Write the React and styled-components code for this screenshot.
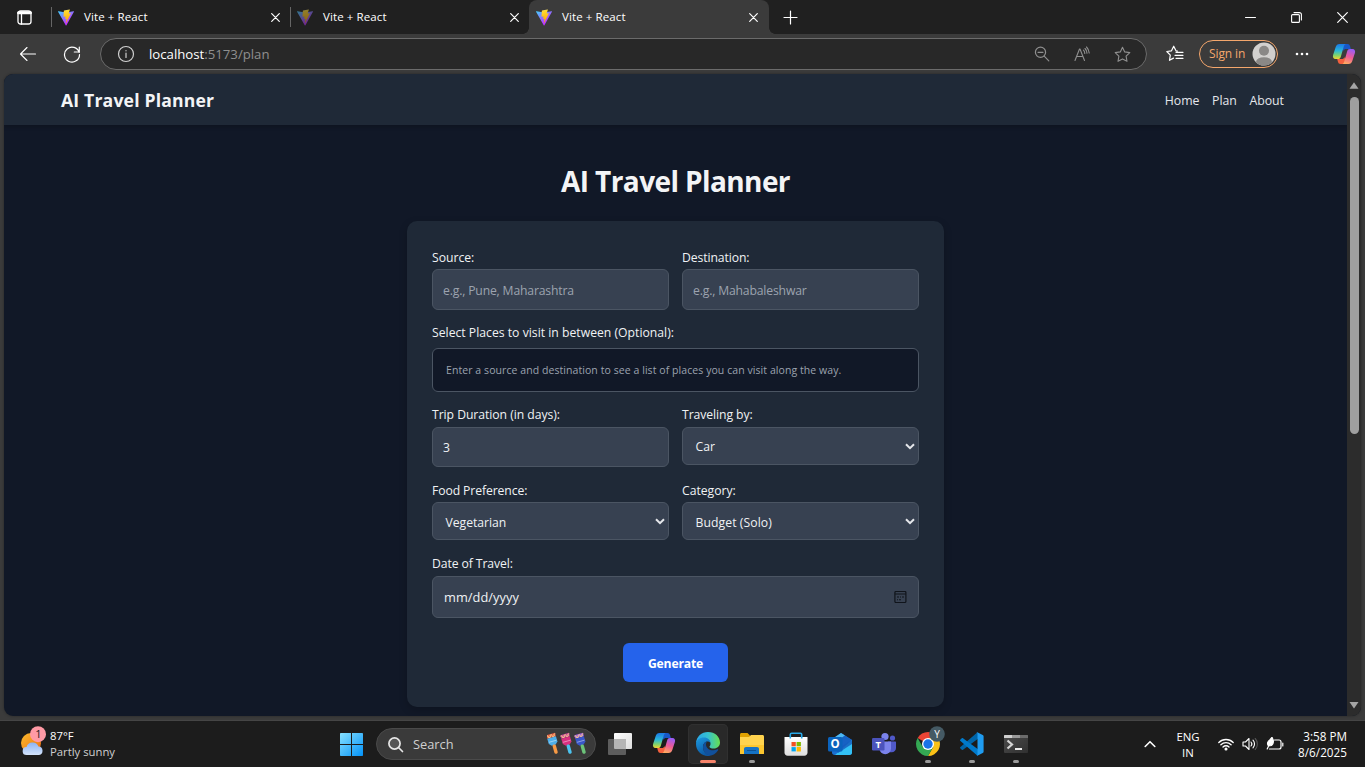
import React from "react";
import styled, { createGlobalStyle } from "styled-components";

const Global = createGlobalStyle`
  * { box-sizing: border-box; }
  html, body { margin: 0; padding: 0; overflow: hidden; background: #1c1c1c; }
  body, input, button { font-family: "Open Sans", "Noto Sans", sans-serif; }
  svg { display: block; flex: none; }
`;

const T = styled.span`
  font-size: ${(p) => p.$s}px;
  letter-spacing: ${(p) => p.$ls || 0}px;
  font-weight: ${(p) => p.$w || 400};
  color: ${(p) => p.$c || "inherit"};
  line-height: ${(p) => p.$lh || 16}px;
  white-space: pre;
`;

const Desktop = styled.div`
  width: 1365px; height: 767px; display: flex; flex-direction: column; overflow: hidden;
`;
const Browser = styled.div`
  height: 721px; display: flex; flex-direction: column; background: #3b3b3b;
  border-bottom: 1px solid #454545;
`;

/* ---------- tab strip ---------- */
const TabStrip = styled.div`
  height: 34px; background: #202020; display: flex; align-items: stretch; color: #fff;
`;
const TabActions = styled.div`
  width: 51px; display: flex; align-items: center; padding-left: 16.5px;
`;
const Tab = styled.div`
  width: ${(p) => (p.$active ? 240 : 239)}px;
  display: flex; align-items: center; position: relative;
  padding: 0 ${(p) => (p.$active ? 11 : 10)}px 0 ${(p) => (p.$active ? 7 : 6)}px;
  background: ${(p) => (p.$active ? "#3b3b3b" : "transparent")};
  border-radius: ${(p) => (p.$active ? "8px 8px 0 0" : 0)};
  &::before, &::after {
    content: ""; display: ${(p) => (p.$active ? "block" : "none")};
    position: absolute; bottom: 0; width: 6px; height: 6px;
  }
  &::before { left: -6px; background: radial-gradient(circle at 0 0, transparent 5.5px, #3b3b3b 6px); }
  &::after { right: -6px; background: radial-gradient(circle at 100% 0, transparent 5.5px, #3b3b3b 6px); }
`;
const TabDivider = styled.div`
  width: 1px; height: 20px; margin: 0 6px 0 -6px; background: #666;
`;
const TabTitle = styled(T)` flex: 1; margin-left: 10px; `;
const NewTab = styled.div` width: 42px; display: flex; align-items: center; justify-content: center; `;
const WindowButtons = styled.div` margin-left: auto; display: flex; `;
const WindowButton = styled.div` width: 46px; display: flex; align-items: center; justify-content: center; `;

/* ---------- address bar ---------- */
const Toolbar = styled.div`
  height: 40px; display: flex; align-items: center; color: #fff; padding-left: 19px;
`;
const Address = styled.div`
  width: 1047px; height: 32px; margin-left: 19px; border: 1px solid #6b6b6b; border-radius: 16px;
  background: #282828; display: flex; align-items: center; padding: 0 15px 0 16px; color: #8f8f8f;
`;
const Url = styled.div` flex: 1; margin-left: 14px; display: flex; `;
const AddressIcons = styled.div` display: flex; gap: 23px; align-items: center; `;
const SignIn = styled.div`
  width: 79px; height: 28px; margin-left: 15px; border: 1px solid #f5a76c; border-radius: 14px;
  display: flex; align-items: center; justify-content: space-between; padding: 0 1px 0 9px; color: #f5a76c;
`;
const ProfileGap = styled.div` width: 23px; `;

/* ---------- web page ---------- */
const Viewport = styled.div`
  flex: 1; margin: 0 4px 4px; display: flex; border-radius: 9px; overflow: hidden; background: #111827;
  box-shadow: 0 0 3px rgba(0, 0, 0, 0.35);
`;
const Page = styled.div` flex: 1; display: flex; flex-direction: column; align-items: center; `;
const NavBar = styled.div`
  width: 100%; height: 51px; background: #1f2937; display: flex; align-items: center;
  justify-content: space-between; padding: 2px 63px 0 57px; color: #f3f4f6;
  box-shadow: 0 2px 4px rgba(0, 0, 0, 0.2);
`;
const Brand = styled(T)` padding-bottom: 2px; `;
const NavLinks = styled.div` display: flex; gap: 12.5px; color: #e5e7eb; `;
const Heading = styled(T)` margin-top: 37px; color: #f3f4f6; display: block; `;
const Card = styled.div`
  width: 537px; height: 486px; margin-top: 21px; padding: 26px 25px 25px; border-radius: 10px;
  background: #1f2937; color: #e5e7eb; display: flex; flex-direction: column;
  box-shadow: 0 3px 8px rgba(0, 0, 0, 0.2);
`;
const FormRow = styled.div`
  display: grid; gap: 13px; grid-template-columns: ${(p) => (p.$single ? "1fr" : "1fr 1fr")};
  margin-bottom: ${(p) => p.$mb}px; align-items: start;
`;
const Field = styled.div` display: flex; flex-direction: column; min-width: 0; `;
const Label = styled(T)` height: ${(p) => p.$h}px; color: #f0f2f4; `;
const control = `
  width: 100%; border: 1px solid #4b5563; border-radius: 6px; background: #374151; color: #f0f2f4;
  display: flex; align-items: center; outline: none;
`;
const Input = styled.input`
  ${control}
  height: ${(p) => p.$h}px; padding: ${(p) => (p.$pt ?? 2)}px 10px 0; font-size: 12.2px; letter-spacing: ${(p) => p.$ls || 0}px;
  &::placeholder { color: #9ca3af; opacity: 1; }
`;
const Select = styled.div`
  ${control}
  height: 38px; padding: ${(p) => p.$pt || 0}px 3px 0 12.5px; justify-content: space-between;
`;
const Chevron = styled.svg` margin-top: ${(p) => -(p.$up || 0)}px; `;
const DateInput = styled.div`
  ${control}
  height: 42px; padding: 0 11px; justify-content: space-between;
`;
const Hint = styled.div`
  ${control}
  height: 44px; background: #111827; color: #9ca3af; padding: 0 13px;
`;
const Generate = styled.button`
  width: 105px; height: 39px; align-self: center; border: 0; border-radius: 6px; padding: 1px 0 0;
  background: #2563eb; color: #fff;
`;
const ScrollBar = styled.div`
  width: 14px; background: #2c2c2c; display: flex; flex-direction: column; align-items: center;
  padding: 8px 0 7px;
`;
const Thumb = styled.div` width: 9px; height: 337px; margin: 8px 0 auto; border-radius: 5px; background: #9f9f9f; `;

/* ---------- taskbar ---------- */
const TaskBar = styled.div`
  height: 46px; background: #1c1c1c; display: flex; align-items: center; color: #fff; padding-left: 20px;
`;
const Weather = styled.div` width: 320px; display: flex; align-items: center; gap: 4px; `;
const Stack = styled.div`
  display: flex; flex-direction: column; align-items: ${(p) => p.$align || "flex-start"};
  width: ${(p) => (p.$width ? p.$width + "px" : "auto")}; margin-left: ${(p) => p.$ml || 0}px;
  padding-top: ${(p) => p.$pt || 0}px;
`;
const Search = styled.div`
  width: 220px; height: 32px; margin: 0 2px 0 12px; border-radius: 16px; background: #3a3a3a;
  border: 1px solid #4a4a4a; display: flex; align-items: center; padding: 0 6px 0 10px;
`;
const SearchText = styled(T)` flex: 1; margin-left: 9px; color: #d0d0d0; `;
const AppSlot = styled.div`
  width: 44px; height: 46px; display: flex; justify-content: center; padding-top: 3px;
`;
const AppTile = styled.div`
  width: 40px; height: 40px; border-radius: 5px; display: flex; flex-direction: column; align-items: center;
  background: ${(p) => (p.$active ? "#292929" : "transparent")};
  box-shadow: ${(p) => (p.$active ? "inset 0 0 0 1px #303030" : "none")};
  padding-top: 7px;
`;
const Running = styled.div`
  width: ${(p) => (p.$active ? 16 : 6)}px; height: 3px; border-radius: 2px; margin-top: 3px;
  background: ${(p) => (p.$active ? "#f7846b" : "#9a9a9a")};
`;
const Tray = styled.div` margin-left: auto; display: flex; align-items: center; padding-right: 18px; `;

/* ---------- drawings ---------- */
const ViteLogo = ({ id, dim }) => (
  <svg width="16" height="17" viewBox="0 0 256 257" opacity={dim ? 0.5 : 1}>
    <defs>
      <linearGradient id={id + "a"} x1="0" y1="0" x2=".6" y2=".8">
        <stop offset="0" stopColor="#41d1ff" /><stop offset="1" stopColor="#bd34fe" />
      </linearGradient>
      <linearGradient id={id + "b"} x1=".4" y1="0" x2=".5" y2=".9">
        <stop offset="0" stopColor="#ffea83" /><stop offset=".1" stopColor="#ffdd35" /><stop offset="1" stopColor="#ffa800" />
      </linearGradient>
    </defs>
    <path fill={`url(#${id}a)`} d="M255.153 37.938L134.897 252.976c-2.483 4.44-8.862 4.466-11.382.048L.875 37.958c-2.746-4.814 1.371-10.646 6.827-9.67l120.385 21.517a6.537 6.537 0 0 0 2.322-.004l117.867-21.483c5.438-.991 9.574 4.796 6.877 9.62Z" />
    <path fill={`url(#${id}b)`} d="M185.432.063L96.44 17.501a3.268 3.268 0 0 0-2.634 3.014l-5.474 92.456a3.268 3.268 0 0 0 3.997 3.378l24.777-5.718c2.318-.535 4.413 1.507 3.936 3.838l-7.361 36.047c-.495 2.426 1.782 4.5 4.151 3.78l15.304-4.649c2.372-.72 4.652 1.36 4.15 3.788l-11.698 56.621c-.732 3.542 3.979 5.473 5.943 2.437l1.313-2.028l72.516-144.72c1.215-2.423-.88-5.186-3.54-4.672l-25.505 4.922c-2.396.462-4.435-1.77-3.759-4.114l16.646-57.705c.677-2.35-1.37-4.583-3.769-4.113Z" />
  </svg>
);

const Line = styled(({ w = 16, h = w, d, sw = 1.2, color = "currentColor", children, className }) => (
  <svg className={className} width={w} height={h} viewBox={`0 0 ${w} ${h}`} fill="none" stroke={color}
    strokeWidth={sw} strokeLinecap="round" strokeLinejoin="round">
    {d && <path d={d} />}
    {children}
  </svg>
))` margin-left: ${(p) => p.$ml || 0}px; `;

const CloseIcon = ({ s = 9 }) => <Line w={s} d={`M.7.7 ${s - 0.7} ${s - 0.7}M${s - 0.7}.7.7 ${s - 0.7}`} />;
const STAR = "M8.5 1.2l2.2 4.7 5.1.7-3.7 3.6.9 5.1-4.5-2.4L4 15.3l.9-5.1L1.200 6.600l5.100-.7z";

const CopilotLogo = ({ id, size = 24 }) => (
  <svg width={size} height={size} viewBox="0 0 24 24">
    <defs>
      <linearGradient id={id + "a"} x1="0" y1="0" x2="0" y2="1">
        <stop offset="0" stopColor="#1a78e8" /><stop offset=".45" stopColor="#2ab7d8" />
        <stop offset=".75" stopColor="#7fd36b" /><stop offset="1" stopColor="#f2d432" />
      </linearGradient>
      <linearGradient id={id + "b"} x1=".6" y1="0" x2=".3" y2="1">
        <stop offset="0" stopColor="#9a5cf5" /><stop offset=".5" stopColor="#ec5a96" /><stop offset="1" stopColor="#ffab5e" />
      </linearGradient>
    </defs>
    <path fill="#1857c8" d="M9 2h6.500c1.500 0 2.100.8 2.500 2l.8 3h-4.600c-1.500 0-2.200.6-2.600 2z" />
    <path fill="#f4603e" d="M15 22H8.500C7 22 6.400 21.200 6 20l-.8-3h4.600c1.500 0 2.200-.6 2.600-2z" />
    <path fill={`url(#${id}a)`} d="M7.500 2h6.300c-1.200.4-1.700 1.400-2.100 2.800L8.800 14.700C8.300 16.300 7.600 17 6 17H3.600C1.300 17 .5 15.300 1.100 13L3.700 5C4.400 2.900 5.400 2 7.500 2z" />
    <path fill={`url(#${id}b)`} d="M16.500 22h-6.300c1.200-.4 1.700-1.400 2.100-2.800l2.900-9.900C15.700 7.700 16.400 7 18 7h2.400c2.300 0 3.100 1.700 2.500 4l-2.600 8c-.7 2.100-1.700 3-3.800 3z" />
  </svg>
);

const EdgeLogo = () => (
  <svg width="26" height="26" viewBox="0 0 26 26">
    <defs>
      <linearGradient id="eg1" x1="0" y1=".3" x2="1" y2=".3">
        <stop offset="0" stopColor="#2aa5e8" /><stop offset=".5" stopColor="#35c1d0" /><stop offset="1" stopColor="#67e04f" />
      </linearGradient>
      <linearGradient id="eg2" x1="0" y1="0" x2=".4" y2="1">
        <stop offset="0" stopColor="#1c9be2" /><stop offset="1" stopColor="#0c59a4" />
      </linearGradient>
    </defs>
    <path fill="url(#eg1)" d="M1 12C1.500 5.500 6.500 1 13 1c7 0 12 4.700 12 10.500 0 3.600-2.600 6-6.200 6-2.600 0-4.300-.8-4.300-1.800 0-.7 1-1.200 1-3 0-2.600-2.600-5-6.200-5C5.500 7.700 2.500 9.300 1 12z" />
    <path fill="url(#eg2)" d="M1 13c0-4 3.600-6.500 8-6.500 3.900 0 6.500 2.500 6.500 5.500-.6-1-1.900-1.500-3-1.500-2.500 0-4.500 2.400-4.500 5.500 0 4.600 3.500 8 7.500 8.700-.8.200-1.600.3-2.500.3C6.400 25 1 19.600 1 13z" />
    <path fill="#11509b" d="M8 16c0-2.900 1.800-5.200 4.200-5.500-.8.700-1.200 1.700-1.200 2.900 0 3.300 3.200 5.900 7.100 5.900 1.500 0 2.900-.4 4.200-1 .7-.3 1.200.3.800.9-2.200 3.400-5.200 5.500-8.600 5.500C11 24 8 20.500 8 16z" />
  </svg>
);

const TaskViewIcon = () => (
  <svg width="26" height="26" viewBox="0 0 26 26">
    <defs>
      <linearGradient id="tv" x1="0" y1="0" x2="1" y2="1"><stop offset="0" stopColor="#fff" /><stop offset="1" stopColor="#ddd" /></linearGradient>
    </defs>
    <rect x="7" y="2" width="18" height="16" rx="1" fill="url(#tv)" />
    <rect x="1" y="8" width="18" height="16" rx="1" fill="#5d5d5d" />
    <path d="M7 8h12v10H8a1 1 0 0 1-1-1z" fill="#b5b5b5" />
  </svg>
);
const FolderIcon = () => (
  <svg width="26" height="26" viewBox="0 0 26 26">
    <path d="M1 3.500C1 2.600 1.600 2 2.500 2h6l2.500 2.500V7H1z" fill="#e0a100" />
    <path d="M1 6h9l2-2h11.500c.9 0 1.500.6 1.500 1.500V22c0 .6-.4 1-1 1H2c-.6 0-1-.4-1-1z" fill="#ffd34e" />
    <path d="M1 14h24v8c0 .6-.4 1-1 1H2c-.6 0-1-.4-1-1z" fill="#fcc62f" />
    <path d="M5 23v-5c0-1.200.8-2 2-2h11c1.200 0 2 .8 2 2v5z" fill="#1673c5" />
    <path d="M8 19.500h9" stroke="#0c5396" />
  </svg>
);
const StoreIcon = () => (
  <svg width="26" height="26" viewBox="0 0 26 26">
    <defs><linearGradient id="st" x1="0" y1="0" x2="0" y2="1"><stop offset="0" stopColor="#fff" /><stop offset="1" stopColor="#dedede" /></linearGradient></defs>
    <path d="M1.500 6h23v15.500c0 2-1.200 3.200-3.200 3.200H4.700c-2 0-3.200-1.200-3.200-3.200z" fill="url(#st)" />
    <path d="M7.300 7.500V3.600c0-.8.500-1.300 1.300-1.300h8.800c.8 0 1.300.5 1.300 1.300v3.900" fill="none" stroke="#27a8e8" strokeWidth="1.600" />
    <path d="M8.500 11h4.300v4.300H8.500z" fill="#f25022" /><path d="M13.600 11h4.300v4.300h-4.300z" fill="#7fba00" />
    <path d="M8.500 16.100h4.300v4.300H8.500z" fill="#00a4ef" /><path d="M13.600 16.100h4.300v4.300h-4.300z" fill="#ffb900" />
  </svg>
);
const Glyph = styled.text` font-family: "Open Sans", sans-serif; font-weight: ${(p) => p.$w || 700}; text-anchor: middle; `;
const OutlookIcon = () => (
  <svg width="26" height="26" viewBox="0 0 26 26">
    <path d="M5 9L14 2l11 7v12.500c0 1.500-1 2.500-2.500 2.500h-15C6 24 5 23 5 21.500z" fill="#1b6fd0" />
    <path d="M5 8l9-6 4 2.500L7 12z" fill="#4db8f2" /><path d="M18 4.500L25 9 12 18l-5-5z" fill="#1762c4" />
    <path d="M25 9v12.500c0 1.500-1 2.500-2.500 2.500H8z" fill="#33c1f5" /><path d="M25 9v4L11 22l-2-3z" fill="#155abb" opacity=".8" />
    <rect x="1" y="6" width="14.500" height="14.500" rx="1.500" fill="#0b63bd" />
    <Glyph x="8.200" y="17.400" fontSize="11.500" fill="#fff">O</Glyph>
  </svg>
);
const TeamsIcon = () => (
  <svg width="26" height="26" viewBox="0 0 26 26">
    <circle cx="14" cy="5.500" r="3.600" fill="#7b83eb" /><circle cx="21.500" cy="7" r="2.600" fill="#5059c9" />
    <path d="M17 10.500h7c.7 0 1 .4 1 1V17a4.200 4.200 0 0 1-4.300 4.200H17z" fill="#5059c9" />
    <path d="M8.500 10.500h11.500v7a5.750 5.750 0 0 1-11.500 0z" fill="#7b83eb" />
    <rect x="1" y="7" width="12.500" height="12.500" rx="1.200" fill="#4b53bc" />
    <Glyph x="7.300" y="16.800" fontSize="9.500" fill="#fff">T</Glyph>
  </svg>
);
const BadgedIcon = styled.svg` margin: -5px 0 1px; overflow: visible; `;
const ChromeIcon = () => (
  <BadgedIcon width="30" height="30" viewBox="0 0 30 30">
    <g transform="translate(15 18)">
      <path d="M0 0L-10.390-6A12 12 0 0 1 10.390-6z" fill="#e94435" />
      <path d="M0-6h10.390A12 12 0 0 1 0 12l5.200-9z" fill="#fbc116" />
      <path d="M-10.390-6A12 12 0 0 0 0 12l5.200-9L-5.200 3z" fill="#34a853" />
      <circle r="6" fill="#fff" /><circle r="4.700" fill="#1a73e8" />
    </g>
    <circle cx="24" cy="8" r="7.800" fill="#455a64" />
    <Glyph x="24" y="11.700" fontSize="10" fill="#fff" $w={400}>Y</Glyph>
  </BadgedIcon>
);
const CodeIcon = () => (
  <svg width="26" height="26" viewBox="0 0 26 26">
    <path d="M1.200 17.200l1.600 1.600c.4.300.8.300 1.200 0L19 7.800V1.500c-.5-.1-1 .1-1.400.5L1.200 16.300c-.3.300-.3.600 0 .9z" fill="#0065a9" />
    <path d="M1.200 8.800l1.600-1.600c.4-.3.800-.3 1.200 0L19 18.200v6.300c-.5.100-1-.1-1.400-.5L1.200 9.700c-.3-.3-.3-.6 0-.9z" fill="#007acc" />
    <path d="M18.200 24.600c-.4 0-.7-.2-1-.5.600.5 1.300.1 1.300-.7V2.600c0-.8-.7-1.200-1.300-.7.400-.5 1-.6 1.600-.3l4.900 2.300c.6.300.9.800.9 1.400v15.400c0 .6-.3 1.100-.9 1.400l-4.900 2.300c-.2.100-.4.200-.6.200z" fill="#1f9cf0" />
  </svg>
);
const TerminalIcon = () => (
  <svg width="26" height="26" viewBox="0 0 26 26">
    <defs><linearGradient id="tm" x1="0" y1="0" x2="1" y2="1"><stop offset="0" stopColor="#4c4c4c" /><stop offset="1" stopColor="#303030" /></linearGradient></defs>
    <rect x="1" y="4" width="24" height="18" rx="1" fill="url(#tm)" />
    <path d="M1 7V5c0-.6.400-1 1-1h7v3z" fill="#cfcfcf" /><path d="M9 4h8v3H9z" fill="#999" /><path d="M17 4h7c.6 0 1 .4 1 1v2h-8z" fill="#6b6b6b" />
    <path d="M4.500 9.500l4.500 4-4.500 4" fill="none" stroke="#d4d4d4" strokeWidth="2.200" /><path d="M12 18h7" stroke="#fff" strokeWidth="1.800" />
  </svg>
);
const WeatherIcon = () => (
  <svg width="26" height="36" viewBox="0 -2 26 36">
    <defs>
      <linearGradient id="sun" x1="0" y1="0" x2="1" y2="1"><stop offset="0" stopColor="#fbbd2c" /><stop offset="1" stopColor="#ee6a14" /></linearGradient>
      <linearGradient id="cl" x1="0" y1="0" x2="0" y2="1"><stop offset="0" stopColor="#8db4f5" /><stop offset="1" stopColor="#d3e3fb" /></linearGradient>
    </defs>
    <circle cx="11" cy="15" r="10" fill="url(#sun)" />
    <path d="M6.800 27a4 4 0 0 1-.3-8 6.400 6.400 0 0 1 12-.5 4.300 4.300 0 0 1 .6 8.500z" fill="url(#cl)" />
    <circle cx="18" cy="6.200" r="8" fill="#ff9aa5" />
    <Glyph x="18.500" y="10.200" fontSize="11" fill="#1c1c1c" $w={400}>1</Glyph>
  </svg>
);
const StartIcon = () => (
  <svg width="24" height="24" viewBox="0 0 24 24">
    <defs><linearGradient id="win" gradientUnits="userSpaceOnUse" x1="0" y1="0" x2="24" y2="24"><stop offset="0" stopColor="#8ae3ff" /><stop offset="1" stopColor="#0090f8" /></linearGradient></defs>
    <path fill="url(#win)" d="M0 1.800c0-.5.300-.8.800-.8H11v11H0zM12 1h10.200c.5 0 .8.300.8.800V12H12zM0 13h11v11H.8c-.5 0-.8-.3-.8-.8zM12 13h11v10.200c0 .5-.3.800-.8.800H12z" />
  </svg>
);
const Brush = ({ x, tip, head, handle }) => (
  <g transform={`translate(${x} 0) rotate(-16 7 12)`}>
    <rect x="2" y="1.500" width="9" height="3.500" fill={tip} />
    <path d="M2 2.500h1.500v2h2v-2h2v2h2v-2H11" stroke="#f4c98a" strokeWidth=".9" fill="none" />
    <path d="M2 5h9v5.500L8.500 13h-4L2 10.500z" fill={head} />
    <path d="M2.500 9h8" stroke="#fff" strokeWidth=".8" opacity=".5" />
    <rect x="5" y="12.500" width="3.400" height="9.500" rx="1.500" fill={handle} />
  </g>
);
const Brushes = () => (
  <svg width="42" height="24" viewBox="0 0 42 24">
    <Brush x={0} tip="#e2543c" head="#4eaee8" handle="#f79a45" />
    <Brush x={14} tip="#c9429b" head="#d8307f" handle="#4cc3ef" />
    <Brush x={28} tip="#9c5be0" head="#3956c9" handle="#6cc37a" />
  </svg>
);
const SelectArrow = ({ up }) => (
  <Chevron $up={up} width="10" height="7" viewBox="0 0 10 7" fill="none" stroke="#e5e7eb" strokeWidth="2">
    <path d="M1 1.200l4 4 4-4" />
  </Chevron>
);
const CalendarIcon = () => (
  <svg width="13" height="13" viewBox="0 0 13 13" fill="none" stroke="#10141b">
    <rect x=".9" y=".5" width="11" height="11" rx="1" strokeWidth="1.200" /><path d="M.9 3h11" />
    <path d="M3 6h2M6 6h1M8 6h2M3 8.700h1M5 8.700h2" strokeWidth="1.100" />
  </svg>
);
const Avatar = () => (
  <svg width="24" height="24" viewBox="0 0 24 24">
    <defs><clipPath id="av"><circle cx="12" cy="12" r="11.500" /></clipPath></defs>
    <circle cx="12" cy="12" r="11.500" fill="#d2d0ce" />
    <g clipPath="url(#av)" fill="#8a8886"><circle cx="12" cy="8.800" r="5" /><ellipse cx="12" cy="20" rx="8" ry="4.800" /></g>
  </svg>
);
const Dots = styled.svg` margin-left: 17px; `;

const apps = [
  { icon: <TaskViewIcon /> },
  { icon: <CopilotLogo id="ct" size={24} /> },
  { icon: <EdgeLogo />, active: true, running: true },
  { icon: <FolderIcon />, running: true },
  { icon: <StoreIcon /> },
  { icon: <OutlookIcon /> },
  { icon: <TeamsIcon /> },
  { icon: <ChromeIcon />, running: true },
  { icon: <CodeIcon />, running: true },
  { icon: <TerminalIcon />, running: true },
];

const BrowserTab = ({ id, active, dim }) => (
  <Tab $active={active}>
    {!active && <TabDivider />}
    <ViteLogo id={id} dim={dim} />
    <TabTitle $s={11.5} $ls={0.1}>Vite + React</TabTitle>
    <CloseIcon />
  </Tab>
);

const FieldLabel = ({ h, children, ls = -0.02 }) => <Label $s={12.2} $h={h} $lh={22} $ls={ls}>{children}</Label>;

export default function App() {
  return (
    <Desktop>
      <Global />
      <Browser>
        <TabStrip>
          <TabActions>
            <Line w={15} sw={1.3}>
              <rect x="1" y="1" width="13" height="13" rx="2.500" />
              <path d="M1.500 2.800h12" strokeWidth="3" /><path d="M4.500 4v10" />
            </Line>
          </TabActions>
          <BrowserTab id="v1" />
          <BrowserTab id="v2" dim />
          <BrowserTab id="v3" active />
          <NewTab><Line w={15} d="M7.500 1v13M1 7.500h13" /></NewTab>
          <WindowButtons>
            <WindowButton><Line w={11} d="M.5 5.500h10" sw={1} /></WindowButton>
            <WindowButton>
              <Line w={11} sw={1.1}>
                <rect x=".6" y="2.600" width="7.800" height="7.800" rx="1" /><path d="M3 .6h5.400a2 2 0 0 1 2 2V8" />
              </Line>
            </WindowButton>
            <WindowButton><CloseIcon s={11} /></WindowButton>
          </WindowButtons>
        </TabStrip>
        <Toolbar>
          <Line w={18} d="M1.500 9h15M8 2.500L1.500 9 8 15.500" sw={1.1} />
          <Line w={18} d="M16.200 7.500A7.500 7.500 0 1 0 16.500 9.500M16.300 2v5h-5" sw={1.2} $ml={26} />
          <Address>
            <Line w={18} color="#d0d0d0"><circle cx="9" cy="9" r="7.500" /><path d="M9 8v4.500M9 5.500v.3" /></Line>
            <Url><T $s={13.2} $c="#fff">localhost</T><T $s={13.2}>:5173/plan</T></Url>
            <AddressIcons>
              <Line w={17} d="M10.200 10.200l4.600 4.600M4 6.300h5"><circle cx="6.500" cy="6.300" r="5.100" /></Line>
              <Line w={17} sw={1.1} d="M1 14.500L5.500 3h.5l4.500 11.500M2.600 10.500h6.300M9.500 4.200a5 5 0 0 1 1.300 3.300M11 2.500a7 7 0 0 1 2 4.800M12.500 1a9.500 9.500 0 0 1 2.700 6" />
              <Line w={17} d={STAR} sw={1.1} />
            </AddressIcons>
          </Address>
          <Line w={18} $ml={19} sw={1.2} d="M10 5.800L7.700 1.200 5.500 5.800.800 6.500l3.500 3.600-.8 5.200 4-2.200M10 5.800l1.500.2M10 7.300h7M9 10.300h8M10 13.300h7" />
          <SignIn>
            <T $s={12} $ls={-0.1}>Sign in</T>
            <Avatar />
          </SignIn>
          <Dots width="14" height="4" viewBox="0 0 14 4" fill="#fff">
            <circle cx="2" cy="2" r="1.300" /><circle cx="7" cy="2" r="1.300" /><circle cx="12" cy="2" r="1.300" />
          </Dots>
          <ProfileGap />
          <CopilotLogo id="cb" size={24} />
        </Toolbar>
        <Viewport>
          <Page>
            <NavBar>
              <Brand $s={17.6} $w={700} $ls={0.18}>AI Travel Planner</Brand>
              <NavLinks>
                <T $s={12.3} $w={500}>Home</T><T $s={12.3} $w={500}>Plan</T><T $s={12.3} $w={500}>About</T>
              </NavLinks>
            </NavBar>
            <Heading $s={28} $w={700} $lh={38} $ls={-0.6}>AI Travel Planner</Heading>
            <Card>
              <FormRow $mb={12}>
                <Field><FieldLabel h={22}>Source:</FieldLabel><Input $h={41} $ls={-0.17} placeholder="e.g., Pune, Maharashtra" /></Field>
                <Field><FieldLabel h={22} ls={-0.1}>Destination:</FieldLabel><Input $h={41} $ls={-0.17} placeholder="e.g., Mahabaleshwar" /></Field>
              </FormRow>
              <FormRow $single $mb={12}>
                <Field>
                  <FieldLabel h={26} ls={0.01}>Select Places to visit in between (Optional):</FieldLabel>
                  <Hint><T $s={10.5} $ls={0.07}>Enter a source and destination to see a list of places you can visit along the way.</T></Hint>
                </Field>
              </FormRow>
              <FormRow $mb={13}>
                <Field><FieldLabel h={23} ls={-0.05}>Trip Duration (in days):</FieldLabel><Input $h={40} $pt={1} defaultValue="3" /></Field>
                <Field><FieldLabel h={23} ls={-0.08}>Traveling by:</FieldLabel><Select $pt={1}><T $s={12.2}>Car</T><SelectArrow up={1} /></Select></Field>
              </FormRow>
              <FormRow $mb={13}>
                <Field><FieldLabel h={22} ls={-0.1}>Food Preference:</FieldLabel><Select $pt={3}><T $s={12.2} $ls={-0.03}>Vegetarian</T><SelectArrow up={3} /></Select></Field>
                <Field><FieldLabel h={22}>Category:</FieldLabel><Select $pt={3}><T $s={12.2} $ls={0.08}>Budget (Solo)</T><SelectArrow up={3} /></Select></Field>
              </FormRow>
              <FormRow $single $mb={25}>
                <Field><FieldLabel h={23} ls={-0.1}>Date of Travel:</FieldLabel><DateInput><T $s={12.8} $ls={0.05}>mm/dd/yyyy</T><CalendarIcon /></DateInput></Field>
              </FormRow>
              <Generate><T $s={12.2} $w={700} $ls={-0.2}>Generate</T></Generate>
            </Card>
          </Page>
          <ScrollBar>
            <svg width="10" height="7" viewBox="0 0 10 7"><path d="M5 .3L9.500 6.700H.5z" fill="#a5a5a5" /></svg>
            <Thumb />
            <svg width="10" height="8" viewBox="0 0 10 8"><path d="M5 7.500L9.500 1H.5z" fill="#a5a5a5" /></svg>
          </ScrollBar>
        </Viewport>
      </Browser>
      <TaskBar>
        <Weather>
          <WeatherIcon />
          <Stack><T $s={11.3}>87°F</T><T $s={11.3} $c="#d0d0d0">Partly sunny</T></Stack>
        </Weather>
        <StartIcon />
        <Search>
          <Line w={17} sw={1.7} color="#e6e6e6" d="M11.500 11.500l4 4"><circle cx="7.500" cy="7.500" r="5.600" fill="#555" /></Line>
          <SearchText $s={12.8}>Search</SearchText>
          <Brushes />
        </Search>
        {apps.map((a, i) => (
          <AppSlot key={i}>
            <AppTile $active={a.active}>
              {a.icon}
              {a.running && <Running $active={a.active} />}
            </AppTile>
          </AppSlot>
        ))}
        <Tray>
          <Line w={12} h={8} d="M1.200 6.500L6 1.700l4.800 4.800" sw={1.6} />
          <Stack $align="center" $width={36} $ml={14} $pt={2}><T $s={11.4}>ENG</T><T $s={11.4}>IN</T></Stack>
          <Line w={16} h={14} sw={1.3} $ml={12} d="M.8 5.500a10.200 10.200 0 0 1 14.400 0M2.900 7.800a7.200 7.200 0 0 1 10.200 0M5 10a4.200 4.200 0 0 1 6 0"><circle cx="8" cy="12" r=".9" fill="currentColor" /></Line>
          <Line w={17} h={14} sw={1.1} $ml={8} d="M1 5v4h2.500L7 12.500v-11L3.500 5zM9 5a3 3 0 0 1 0 4M11 3.200a5.500 5.500 0 0 1 0 7.600"><path d="M13.200 1.500a8 8 0 0 1 0 11" stroke="#555" /></Line>
          <Line w={18} h={15} sw={1.2} $ml={7} d="M8.500 3H13a2 2 0 0 1 2 2v5a2 2 0 0 1-2 2H3.500M16.800 6v3"><path d="M6 .3C7.500 3 8 6.500 5.500 8.500L2.500 9C.5 6.500 2 4 3.800 3zM2.800 8.500L1.200 12" fill="#fff" /></Line>
          <Stack $align="flex-end" $width={63}><T $s={11.7}>3:58 PM</T><T $s={11.7} $ls={0.03}>8/6/2025</T></Stack>
        </Tray>
      </TaskBar>
    </Desktop>
  );
}
